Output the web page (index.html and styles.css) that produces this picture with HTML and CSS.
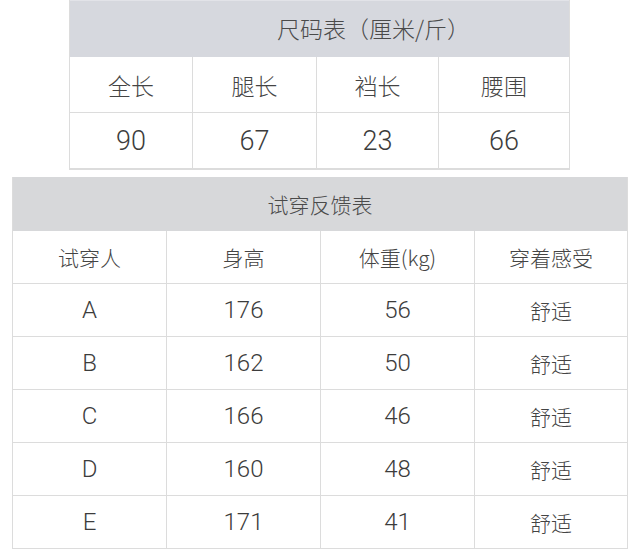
FILE: index.html
```html
<!DOCTYPE html>
<html lang="zh">
<head>
<meta charset="utf-8">
<link rel="stylesheet" href="styles.css">
</head>
<body>
<div class="page">
  <div class="size-table">
    <div class="title t1">尺码表（厘米/斤）</div>
    <div class="grid g1">
      <div class="cell">全长</div>
      <div class="cell">腿长</div>
      <div class="cell">裆长</div>
      <div class="cell">腰围</div>
      <div class="cell num">90</div>
      <div class="cell num">67</div>
      <div class="cell num">23</div>
      <div class="cell num">66</div>
    </div>
  </div>
  <div class="fit-table">
    <div class="title t2">试穿反馈表</div>
    <div class="grid g2">
      <div class="cell">试穿人</div>
      <div class="cell">身高</div>
      <div class="cell">体重(kg)</div>
      <div class="cell">穿着感受</div>

      <div class="cell num">A</div>
      <div class="cell num">176</div>
      <div class="cell num">56</div>
      <div class="cell">舒适</div>

      <div class="cell num">B</div>
      <div class="cell num">162</div>
      <div class="cell num">50</div>
      <div class="cell">舒适</div>

      <div class="cell num">C</div>
      <div class="cell num">166</div>
      <div class="cell num">46</div>
      <div class="cell">舒适</div>

      <div class="cell num">D</div>
      <div class="cell num">160</div>
      <div class="cell num">48</div>
      <div class="cell">舒适</div>

      <div class="cell num">E</div>
      <div class="cell num">171</div>
      <div class="cell num">41</div>
      <div class="cell">舒适</div>
    </div>
  </div>
</div>
</body>
</html>
```
FILE: styles.css
```css
html, body {
  margin: 0;
  padding: 0;
  background: #ffffff;
}
body {
  font-family: "Noto Sans CJK SC", "Noto Sans", sans-serif;
  font-weight: 300;
  color: #444444;
  width: 640px;
  height: 551px;
  overflow: hidden;
}
.page {
  display: flex;
  flex-direction: column;
}
.size-table {
  margin-left: 69px;
  width: 501px;
  border-left: 1px solid #dcdcdc;
  border-right: 1px solid #dcdcdc;
  border-bottom: 1px solid #dcdcdc;
  box-sizing: border-box;
}
.fit-table {
  margin-top: 7px;
  margin-left: 12px;
  width: 616px;
  border-left: 1px solid #dcdcdc;
  border-right: 1px solid #dcdcdc;
  box-sizing: border-box;
}
.title {
  display: flex;
  align-items: center;
  justify-content: center;
  font-size: 21px;
  color: #4a4a4a;
}
.t1 {
  height: 57px;
  background: #d6d8de;
  border-top: 1px solid #e2e3e8;
  box-sizing: border-box;
  padding-left: 108px;
  padding-bottom: 3px;
  font-size: 23px;
}
.t2 {
  height: 54px;
  background: #d7d8da;
}
.grid {
  display: grid;
}
.g1 {
  grid-template-columns: 123px 124px 122px 1fr;
  grid-auto-rows: 56px;
}
.g2 {
  grid-template-columns: 154px 154px 154px 1fr;
  grid-auto-rows: 53px;
}
.cell {
  display: flex;
  align-items: center;
  justify-content: center;
  font-size: 21px;
  border-right: 1px solid #dcdcdc;
  border-bottom: 1px solid #dcdcdc;
  color: #444444;
}
.g1 .cell {
  font-size: 23px;
}
.grid .cell:nth-child(4n) {
  border-right: none;
}
.num {
  font-family: "Roboto", "Noto Sans", sans-serif;
  font-weight: 300;
  font-size: 24px;
  color: #3c3c3c;
}
.g1 .num {
  font-size: 27px;
}
```
